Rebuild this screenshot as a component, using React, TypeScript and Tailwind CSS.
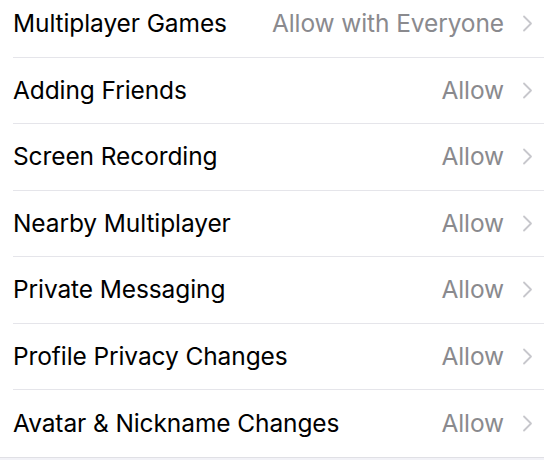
import React from 'react';

const rows: { label: string; value: string }[] = [
    { label: 'Multiplayer Games', value: 'Allow with Everyone' },
    { label: 'Adding Friends', value: 'Allow' },
    { label: 'Screen Recording', value: 'Allow' },
    { label: 'Nearby Multiplayer', value: 'Allow' },
    { label: 'Private Messaging', value: 'Allow' },
    { label: 'Profile Privacy Changes', value: 'Allow' },
    { label: 'Avatar & Nickname Changes', value: 'Allow' },
];

const Chevron = () => (
    <svg width="11" height="17" viewBox="0 0 11 17" fill="none" className="shrink-0">
        <path d="M2 1.5L9 8.5L2 15.5" stroke="#c7c7cc" strokeWidth="1.8" strokeLinecap="round" strokeLinejoin="round" />
    </svg>
);

const App: React.FC = () => {
    return (
        <div className="h-[460px] w-[544px] overflow-hidden bg-[#f2f2f7] font-['Inter',sans-serif]">
            <div className="-mt-[9px] bg-white pl-[13px]">
                {rows.map((row, i) => (
                    <div
                        key={row.label}
                        className={`flex h-[66.5px] items-center pr-[11px] ${i < rows.length - 1 ? 'border-b border-[#e5e5ea]' : ''}`}
                    >
                        <span className="flex-1 text-[24.5px] tracking-[-0.1px] text-black">{row.label}</span>
                        <span className="mr-[18px] text-[24.5px] tracking-[-0.1px] text-[#8a8a8e]">{row.value}</span>
                        <Chevron />
                    </div>
                ))}
            </div>
            <div className="h-px bg-[#e0e0e5]" />
        </div>
    );
};

export default App;
